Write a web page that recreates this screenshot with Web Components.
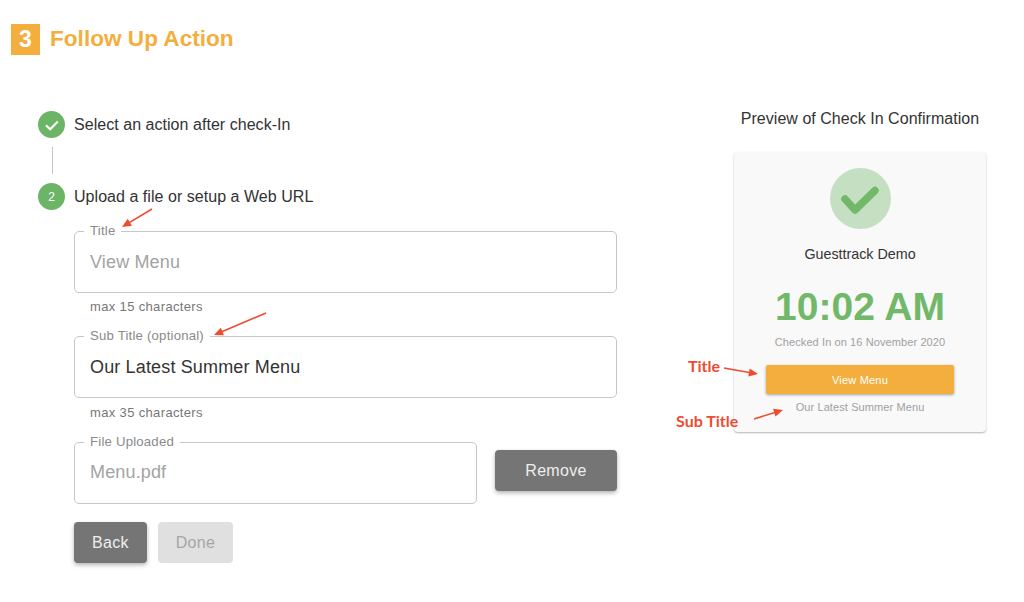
<!DOCTYPE html>
<html>
<head>
<meta charset="utf-8">
<title>Follow Up Action</title>
<style>
  html, body { margin: 0; padding: 0; background: #fff; }
  body { width: 1024px; height: 602px; overflow: hidden; font-family: "Liberation Sans", Arial, sans-serif; color: #333; }
</style>
</head>
<body>
<follow-up-page>
  <section-header number="3">Follow Up Action</section-header>
  <step-list slot="left">
    <step-row done>Select an action after check-In</step-row>
    <step-line></step-line>
    <step-row number="2">Upload a file or setup a Web URL</step-row>
    <upload-form></upload-form>
  </step-list>
  <preview-panel slot="right"></preview-panel>
</follow-up-page>

<script>
//page frame
class FollowUpPage extends HTMLElement {
  constructor() {
    super();
    this.attachShadow({ mode: "open" });
    this.shadowRoot.innerHTML = `
    <style>
      :host { display: block; position: relative; width: 1024px; height: 602px; padding: 24px 0 0 11px; box-sizing: border-box; }
      .cols { display: flex; margin-top: 56px; }
      .left { width: 579px; margin-left: 27px; }
      .right { width: 252px; margin-left: 117px; }
    </style>
    <slot></slot>
    <div class="cols">
      <div class="left"><slot name="left"></slot></div>
      <div class="right"><slot name="right"></slot></div>
    </div>`;
  }
}
customElements.define("follow-up-page", FollowUpPage);

class SectionHeader extends HTMLElement {
  constructor() {
    super();
    this.attachShadow({ mode: "open" });
    this.shadowRoot.innerHTML = `
    <style>
      :host { display: flex; align-items: center; height: 31px; gap: 10px; font: bold 22.6px "Liberation Sans", Arial, sans-serif; color: #f4ae3d; }
      .num { width: 29px; height: 31px; background: #f4ae3d; color: #fff; font-size: 23px; display: flex; align-items: center; justify-content: center; }
      .text { padding-bottom: 2px; }
    </style>
    <div class="num">${this.getAttribute("number")}</div><div class="text"><slot></slot></div>`;
  }
}
customElements.define("section-header", SectionHeader);

class StepList extends HTMLElement {
  constructor() {
    super();
    this.attachShadow({ mode: "open" });
    this.shadowRoot.innerHTML = `<style>:host { display: block; }</style><slot></slot>`;
  }
}
customElements.define("step-list", StepList);

class StepRow extends HTMLElement {
  constructor() {
    super();
    this.attachShadow({ mode: "open" });
    var icon = this.hasAttribute("done")
      ? `<svg width="16" height="16" viewBox="0 0 16 16"><path d="M2 8.4 L6.2 12.2 L13.8 4.4" fill="none" stroke="#fff" stroke-width="2.1"/></svg>`
      : this.getAttribute("number");
    this.shadowRoot.innerHTML = `
    <style>
      :host { display: flex; align-items: center; gap: 9px; height: 27px; font-size: 16px; color: #333; letter-spacing: 0.04px; }
      .dot { width: 27px; height: 27px; border-radius: 50%; background: #6cb567; color: #fff; font-size: 12px; display: flex; align-items: center; justify-content: center; }
      .text { padding-top: 1px; }
    </style>
    <div class="dot">${icon}</div><div class="text"><slot></slot></div>`;
  }
}
customElements.define("step-row", StepRow);

class StepLine extends HTMLElement {
  constructor() {
    super();
    this.attachShadow({ mode: "open" });
    this.shadowRoot.innerHTML = `
    <style>:host { display: block; width: 1px; height: 27px; margin: 9px 0 9px 14px; background: #c4c4c4; }</style>`;
  }
}
customElements.define("step-line", StepLine);

//outlined text box, the label sits in the gap of the border
class OutlinedField extends HTMLElement {
  constructor() {
    super();
    this.attachShadow({ mode: "open" });
    var tone = this.getAttribute("tone") || "#333";
    this.shadowRoot.innerHTML = `
    <style>
      :host { display: block; position: relative; box-sizing: border-box; height: 62px; border: 1px solid #c6c6c6; border-radius: 5px; }
      .label { position: absolute; left: 9px; top: -9px; padding: 0 6px; background: #fff; font-size: 13.2px; line-height: 16px; letter-spacing: 0.2px; color: #8a8a8a; }
      .value { padding: 20px 15px 0; font-size: 18px; line-height: 20px; color: ${tone}; letter-spacing: 0.15px; }
      :host(.short) { height: 62px; }
      :host(.short) .value { padding-top: 19px; }
    </style>
    <div class="label">${this.getAttribute("label")}</div>
    <div class="value"><slot></slot></div>`;
  }
}
customElements.define("outlined-field", OutlinedField);

class FlatButton extends HTMLElement {
  constructor() {
    super();
    this.attachShadow({ mode: "open" });
    this.shadowRoot.innerHTML = `
    <style>
      :host { display: flex; align-items: center; justify-content: center; box-sizing: border-box; height: 41px; border-radius: 4px; font-size: 16px; letter-spacing: 0.3px; background: #757575; color: #eee; box-shadow: 0 2px 4px rgba(0,0,0,.3); }
      :host([disabled]) { background: #e0e0e0; color: #a6a6a6; box-shadow: none; }
    </style>
    <slot></slot>`;
  }
}
customElements.define("flat-button", FlatButton);

class UploadForm extends HTMLElement {
  constructor() {
    super();
    this.attachShadow({ mode: "open" });
    this.shadowRoot.innerHTML = `
    <style>
      :host { display: block; margin: 21px 0 0 36px; width: 543px; }
      .help { height: 43px; padding: 6px 0 0 16px; box-sizing: border-box; font-size: 13px; line-height: 15px; color: #777; letter-spacing: 0.35px; }
      .help.low { padding-top: 7px; }
      .file { display: flex; align-items: flex-start; gap: 18px; margin-top: 1px; }
      .file outlined-field { width: 403px; }
      .file flat-button { width: 122px; margin-top: 8px; }
      .actions { display: flex; gap: 11px; margin-top: 18px; }
      .back { width: 73px; }
      .done { width: 75px; }
    </style>
    <outlined-field label="Title" tone="#a3a3a3">View Menu</outlined-field>
    <div class="help">max 15 characters</div>
    <outlined-field label="Sub Title (optional)">Our Latest Summer Menu</outlined-field>
    <div class="help low">max 35 characters</div>
    <div class="file">
      <outlined-field class="short" label="File Uploaded" tone="#a3a3a3">Menu.pdf</outlined-field>
      <flat-button>Remove</flat-button>
    </div>
    <div class="actions">
      <flat-button class="back">Back</flat-button>
      <flat-button class="done" disabled>Done</flat-button>
    </div>`;
  }
}
customElements.define("upload-form", UploadForm);

class PreviewPanel extends HTMLElement {
  constructor() {
    super();
    this.attachShadow({ mode: "open" });
    this.shadowRoot.innerHTML = `
    <style>
      :host { display: block; position: relative; text-align: center; }
      h2 { margin: -1px -10px 0; height: 42px; font-weight: normal; font-size: 16px; line-height: 18px; color: #333; letter-spacing: 0.03px; white-space: nowrap; }
      .card { box-sizing: border-box; height: 280px; padding-top: 16px; background: #f9f9f9; border-radius: 4px; box-shadow: 0 1px 2px rgba(0,0,0,.3); }
      .tick { width: 61px; height: 61px; margin: 0 auto; border-radius: 50%; background: #c5dfc2; display: flex; align-items: center; justify-content: center; }
      .name { margin-top: 16px; font-size: 14.3px; line-height: 18px; color: #333; }
      .time { margin-top: 21px; font-weight: bold; font-size: 39px; line-height: 46px; color: #72b869; }
      .when { margin-top: 5px; font-size: 11px; line-height: 14px; color: #a0a0a0; letter-spacing: 0.1px; }
      .cta { margin: 16px 32px 0; height: 29px; border-radius: 2px; background: #f4ae3d; color: #fff; font-size: 11px; letter-spacing: 0.2px; display: flex; align-items: center; justify-content: center; box-shadow: 0 1px 3px rgba(0,0,0,.35); }
      .sub { margin-top: 6px; font-size: 11px; line-height: 14px; color: #a0a0a0; letter-spacing: 0.1px; }
    </style>
    <h2>Preview of Check In Confirmation</h2>
    <div class="card">
      <div class="tick"><svg width="42" height="32" viewBox="0 0 42 32"><path d="M6 16 L16 27 L36 7.5" fill="none" stroke="#72b869" stroke-width="7.5" stroke-linecap="round" stroke-linejoin="round"/></svg></div>
      <div class="name">Guesttrack Demo</div>
      <div class="time">10:02 AM</div>
      <div class="when">Checked In on 16 November 2020</div>
      <div class="cta">View Menu</div>
      <div class="sub">Our Latest Summer Menu</div>
    </div>`;
  }
}
customElements.define("preview-panel", PreviewPanel);

//red markup drawn over the screenshot
class MarkupLayer extends HTMLElement {
  constructor() {
    super();
    this.attachShadow({ mode: "open" });
    var arrow = (x1, y1, x2, y2) => {
      var a = Math.atan2(y2 - y1, x2 - x1), l = 10, w = 0.42;
      var p = [[x2, y2], [x2 - l * Math.cos(a - w), y2 - l * Math.sin(a - w)], [x2 - l * Math.cos(a + w), y2 - l * Math.sin(a + w)]];
      return `<line x1="${x1}" y1="${y1}" x2="${x2 - 6 * Math.cos(a)}" y2="${y2 - 6 * Math.sin(a)}" stroke="#ef4b2f" stroke-width="1.6"/><polygon points="${p.join(" ")}" fill="#ef4b2f"/>`;
    };
    this.shadowRoot.innerHTML = `
    <style>
      :host { position: absolute; inset: 0; z-index: 2; display: block; pointer-events: none; }
      svg { position: absolute; left: 0; top: 0; }
      .t { position: absolute; font: bold 16px Lato, sans-serif; color: #ef4b2f; line-height: 18px; }
    </style>
    <svg width="1024" height="602">
      ${arrow(152, 209, 122, 227)}
      ${arrow(266, 313, 214, 335)}
      ${arrow(724, 368, 758, 374)}
      ${arrow(754, 419, 783, 410)}
    </svg>
    <div class="t" style="left:688px;top:357px">Title</div>
    <div class="t" style="left:676px;top:412px">Sub Title</div>`;
  }
}
customElements.define("markup-layer", MarkupLayer);

document.querySelector("follow-up-page").appendChild(document.createElement("markup-layer"));
</script>
</body>
</html>
